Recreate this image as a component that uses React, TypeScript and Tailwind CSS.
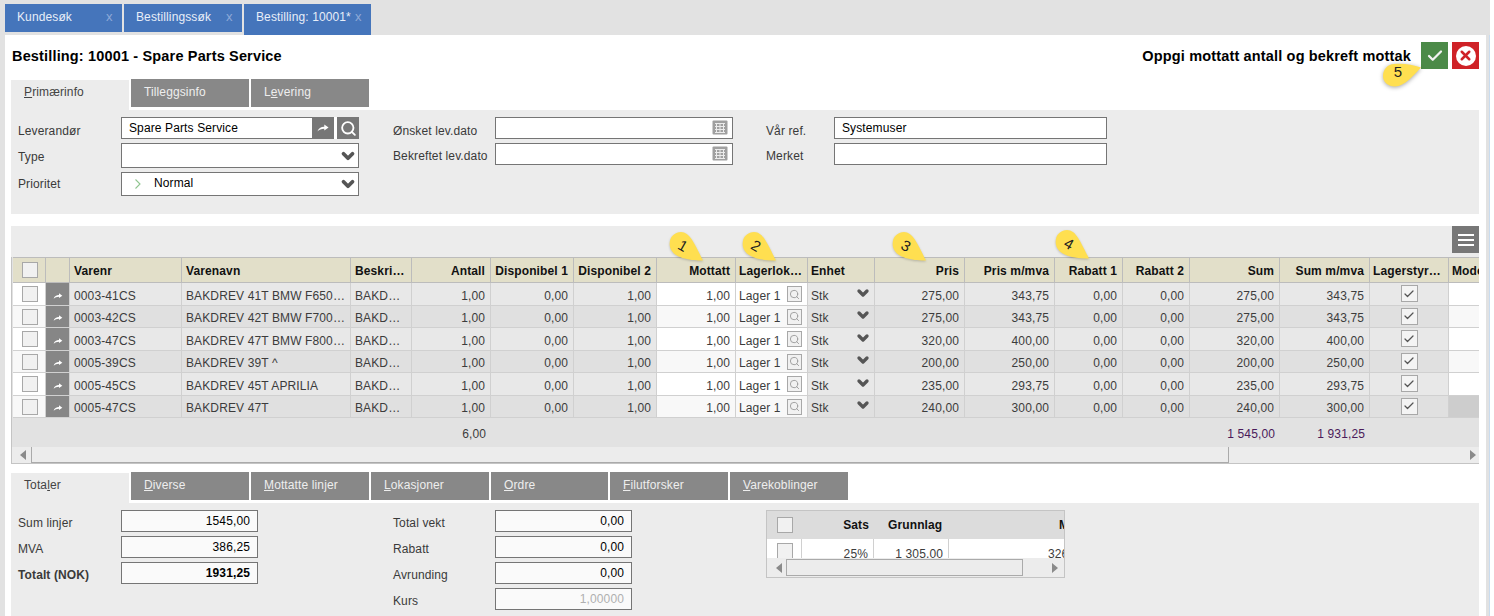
import React from "react";
import { Check, ChevronDown, Search, X } from "lucide-react";

const rows = [
  ["0003-41CS", "BAKDREV 41T BMW F650GS", "275,00", "343,75"],
  ["0003-42CS", "BAKDREV 42T BMW F700GS", "275,00", "343,75"],
  ["0003-47CS", "BAKDREV 47T BMW F800GS", "320,00", "400,00"],
  ["0005-39CS", "BAKDREV 39T ^", "200,00", "250,00"],
  ["0005-45CS", "BAKDREV 45T APRILIA", "235,00", "293,75"],
  ["0005-47CS", "BAKDREV 47T", "240,00", "300,00"],
];

const colWidths = [
  "w-[33px]", "w-[24px]", "w-[112px]", "w-[169px]", "w-[61px]", "w-[79px]", "w-[83px]", "w-[83px]", "w-[79px]", "w-[72px]",
  "w-[67px]", "w-[90px]", "w-[90px]", "w-[68px]", "w-[67px]", "w-[90px]", "w-[90px]", "w-[79px]", "w-[60px]",
];

const Arrow = ({ className }: { className: string }) => (
  <svg viewBox="0 0 14 9" className={className} fill="currentColor">
    <path d="M0.5 8.5 C1.5 5 4.5 3 8.5 3 L8.5 0.5 L13.5 4 L8.5 7.5 L8.5 5.5 C5 5.5 2.5 6.5 0.5 8.5 Z" />
  </svg>
);

const Box = ({ children, className = "" }: { children?: React.ReactNode; className?: string }) => (
  <div className={`border border-[#a8a8a8] bg-[#f1f1f1] flex items-center justify-center ${className}`}>{children}</div>
);

const Chevron = ({ className = "" }: { className?: string }) => (
  <ChevronDown strokeWidth={5} className={`text-[#555555] ${className}`} />
);

const Calendar = () => (
  <svg viewBox="0 0 16 16" className="w-[16px] h-[16px] text-[#a0a0a0]">
    <rect x="0.5" y="0.5" width="15" height="14" rx="1" fill="currentColor" />
    <path d="M3 3.5h10M3 6.5h10M3 9.5h10M3 12.5h10M4.5 3v10M8 3v10M11.5 3v10" stroke="#ececec" strokeWidth="1" fill="none" />
  </svg>
);

const Field = ({ children, className = "" }: { children?: React.ReactNode; className?: string }) => (
  <div className={`border border-[#757575] bg-white flex items-center min-w-0 ${className}`}>{children}</div>
);

const Label = ({ children, className = "pt-[3px]" }: { children: React.ReactNode; className?: string }) => (
  <div className={`text-[#3a3a3a] flex items-center ${className}`}>{children}</div>
);

const NumField = ({ children, className = "text-black" }: { children: React.ReactNode; className?: string }) => (
  <div className={`border border-[#757575] bg-[#fafafa] flex items-center justify-end pr-[7px] pb-[1px] h-[22px] ${className}`}>{children}</div>
);

const SubTab = ({ active, children, w = "w-[118px]" }: { active?: boolean; children: React.ReactNode; w?: string }) =>
  active ? (
    <div className="w-[118px] mr-[2px] h-[30px] self-end bg-[#ececec] text-[#444444] pl-[13px] pt-[5px]">{children}</div>
  ) : (
    <div className={`${w} mr-[2px] h-[28px] bg-[#888888] text-[#eeeeee] pl-[13px] pt-[6px]`}>{children}</div>
  );

const TopTab = ({ label, active, w, xGap }: { label: string; active?: boolean; w: string; xGap: string }) => (
  <div className={`${w} ${active ? "h-[31px]" : "h-[28px]"} bg-[#4575bb] text-[#e8eef8] mr-[2px] flex items-start pt-[6px] pl-[12px]`}>
    <span className="whitespace-nowrap">{label}</span>
    <span className={`${xGap} text-[#8ea9d8] text-[13px]`}>x</span>
  </div>
);

const Teardrop = ({ n, pos }: { n: string; pos: string }) => (
  <div className={`absolute w-[36px] h-[30px] ${pos}`}>
    <svg viewBox="0 0 36 30" className="w-full h-full drop-shadow-[0_1px_1px_rgba(0,0,0,0.2)]">
      <path d="M35 29.5 C24 29.5 5 28 2 16 C0 6 7 1 13 1 C22 1 26 12 35 29.5 Z" fill="#ffdf50" />
    </svg>
    <span className="absolute left-[9px] top-[6px] w-[12px] text-center text-[15px] leading-[18px] text-[#222222] rotate-[30deg]">{n}</span>
  </div>
);

const NumCell = ({ children, className = "" }: { children?: React.ReactNode; className?: string }) => (
  <td className={`border-r border-b border-[#d0d0d0] text-right pr-[5px] pt-[3px] text-[#3c3c3c] ${className}`}>{children}</td>
);

const TextCell = ({ children, className = "pr-[3px]" }: { children?: React.ReactNode; className?: string }) => (
  <td className={`border-r border-b border-[#d0d0d0] pl-[4px] pt-[3px] text-[#3c3c3c] truncate ${className}`}>{children}</td>
);

const Head = ({ children, right, className = "" }: { children?: React.ReactNode; right?: boolean; className?: string }) => (
  <th className={`border-r border-b border-t border-[#bcbcbc] font-bold text-[#111111] pt-[1px] ${right ? "text-right pr-[5px]" : "text-left pl-[3px]"} truncate ${className}`}>{children}</th>
);

export default function App() {
  return (
    <div className="relative w-[1494px] h-[616px] overflow-hidden bg-white text-[12px] leading-[14px] font-['Liberation_Sans',Arial,sans-serif] tracking-[0.12px]">
      <div className="h-[35px] w-[1490px] bg-[#e2e2e2] flex items-start pl-[5px] pt-[4px]">
        <TopTab label="Kundesøk" w="w-[117px]" xGap="ml-[34px]" />
        <TopTab label="Bestillingssøk" w="w-[118px]" xGap="ml-[15px]" />
        <TopTab label="Bestilling: 10001*" active w="w-[127px]" xGap="ml-[4px]" />
      </div>

      <div className="flex h-[581px]">
        <div className="w-[5px] bg-[#e2e2e2]" />
        <main className="w-[1481px] pl-[6px] pr-[7px]">
          <div className="h-[44px] flex items-start justify-between">
            <h1 className="text-[14.5px] leading-[16px] font-bold text-black mt-[13px] ml-[1px] tracking-[0.16px]">Bestilling: 10001 - Spare Parts Service</h1>
            <div className="flex items-start pt-[7px]">
              <span className="text-[14.5px] leading-[16px] font-bold text-black mt-[6px] mr-[10px] tracking-[0.16px]">Oppgi mottatt antall og bekreft mottak</span>
              <div className="w-[27px] h-[27px] bg-[#4b8a48] flex items-center justify-center">
                <Check className="w-[18px] h-[18px] text-[#f2f2f2]" strokeWidth={3} />
              </div>
              <div className="w-[27px] h-[27px] bg-[#cf2227] ml-[4px] flex items-center justify-center">
                <div className="w-[20px] h-[20px] rounded-full bg-white flex items-center justify-center">
                  <X className="w-[15px] h-[15px] text-[#cf2227]" strokeWidth={4} />
                </div>
              </div>
            </div>
          </div>

          <div className="flex h-[31px] items-start">
            <SubTab active><u>P</u>rimærinfo</SubTab>
            <SubTab>Tilleggsinfo</SubTab>
            <SubTab>L<u>e</u>vering</SubTab>
          </div>

          <section className="h-[104px] bg-[#ececec] pt-[7px] pl-[7px] flex items-start">
            <div className="grid grid-cols-[103px_238px] grid-rows-[22px_25px_24px] gap-y-[4px]">
              <Label className="pt-[5px]">Leverandør</Label>
              <Field className="relative pl-[7px] pb-[1px] text-black">
                Spare Parts Service
                <div className="absolute right-[-1px] top-[-1px] bottom-[-1px] w-[47px] flex">
                  <div className="w-[22px] bg-[#777777] flex items-center justify-center text-white"><Arrow className="w-[12px] h-[8px]" /></div>
                  <div className="w-[3px] bg-white" />
                  <div className="w-[22px] bg-[#777777] flex items-center justify-center text-white"><Search className="w-[17px] h-[17px]" strokeWidth={2.6} /></div>
                </div>
              </Field>
              <Label>Type</Label>
              <Field className="justify-end pr-[1px]"><Chevron className="w-[18px] h-[18px]" /></Field>
              <Label className="pt-0">Prioritet</Label>
              <Field className="pl-[13px] pr-[1px] text-black">
                <svg viewBox="0 0 6 10" className="w-[6px] h-[10px] text-[#8fc58f]" fill="none" stroke="currentColor" strokeWidth="1.1"><path d="M0.5 0.5 L5 5 L0.5 9.5" /></svg>
                <span className="ml-[13px] pb-[2px]">Normal</span>
                <Chevron className="w-[18px] h-[18px] ml-auto" />
              </Field>
            </div>

            <div className="grid grid-cols-[102px_238px] grid-rows-[22px_22px] gap-y-[4px] ml-[34px]">
              <Label className="pt-[5px]">Ønsket lev.dato</Label>
              <Field className="justify-end pr-[4px]"><Calendar /></Field>
              <Label>Bekreftet lev.dato</Label>
              <Field className="justify-end pr-[4px]"><Calendar /></Field>
            </div>

            <div className="grid grid-cols-[68px_273px] grid-rows-[22px_22px] gap-y-[4px] ml-[33px]">
              <Label className="pt-[5px]">Vår ref.</Label>
              <Field className="pl-[7px] pb-[1px] text-black">Systemuser</Field>
              <Label>Merket</Label>
              <Field />
            </div>
          </section>

          <div className="h-[12px]" />

          <section className="bg-[#ececec] border-b border-[#c4c4c4] h-[238px] flex flex-col">
            <div className="h-[31px] shrink-0 flex justify-end">
              <div className="w-[27px] h-[27px] bg-[#777777] flex flex-col items-center justify-center gap-[3px]">
                <div className="w-[16px] h-[2px] bg-white" />
                <div className="w-[16px] h-[2px] bg-white" />
                <div className="w-[16px] h-[2px] bg-white" />
              </div>
            </div>
            <div className="overflow-hidden border-l border-[#c4c4c4] pl-[1px] flex-1 bg-[#e2e2e2]">
              <table className="table-fixed w-[1496px] border-separate border-spacing-0">
                <colgroup>
                  {colWidths.map((w, i) => (
                    <col key={i} className={w} />
                  ))}
                </colgroup>
                <thead>
                  <tr className="h-[26px] bg-[#e2dfc9]">
                    <th className="border-r border-b border-t border-[#bcbcbc] pl-[9px]"><Box className="w-[16px] h-[16px]" /></th>
                    <Head />
                    <Head className="pl-[4px]">Varenr</Head>
                    <Head className="pl-[4px]">Varenavn</Head>
                    <Head className="pl-[4px] pr-[5px]">Beskrivelse</Head>
                    <Head right>Antall</Head>
                    <Head right>Disponibel 1</Head>
                    <Head right>Disponibel 2</Head>
                    <Head right>Mottatt</Head>
                    <Head>Lagerlokasjon</Head>
                    <Head>Enhet</Head>
                    <Head right>Pris</Head>
                    <Head right>Pris m/mva</Head>
                    <Head right>Rabatt 1</Head>
                    <Head right>Rabatt 2</Head>
                    <Head right>Sum</Head>
                    <Head right>Sum m/mva</Head>
                    <Head className="pr-[5px]">Lagerstyring</Head>
                    <Head>Modell</Head>
                  </tr>
                </thead>
                <tbody>
                  {rows.map((r, i) => {
                    const even = i % 2 === 1;
                    const light = even ? "bg-[#f8f8f8]" : "bg-white";
                    return (
                      <tr key={r[0]} className={`${even ? "h-[22px] bg-[#e0e0e0]" : "h-[23px] bg-[#e8e8e8]"}`}>
                        <td className={`border-r border-b border-[#d0d0d0] pl-[9px] ${light}`}><Box className="w-[16px] h-[16px]" /></td>
                        <td className="border-r border-b border-[#d0d0d0] bg-[#868686] text-white"><Arrow className="w-[10px] h-[6px] mx-auto mt-[3px]" /></td>
                        <TextCell>{r[0]}</TextCell>
                        <TextCell>{r[1]}</TextCell>
                        <TextCell className="pr-[8px]">BAKDREV</TextCell>
                        <NumCell>1,00</NumCell>
                        <NumCell>0,00</NumCell>
                        <NumCell>1,00</NumCell>
                        <NumCell className={light}>1,00</NumCell>
                        <td className={`border-r border-b border-[#d0d0d0] pl-[3px] ${light}`}>
                          <div className="flex items-center text-[#3c3c3c]">
                            <span className="pt-[3px]">Lager 1</span>
                            <Box className="w-[15px] h-[16px] ml-auto mr-[5px] bg-[#eeeeee]"><Search className="w-[11px] h-[11px] text-[#9a9a9a]" /></Box>
                          </div>
                        </td>
                        <td className="border-r border-b border-[#d0d0d0] pl-[3px] text-[#3c3c3c]">
                          <div className="flex items-center">
                            <span className="pt-[3px]">Stk</span>
                            <Chevron className="w-[16px] h-[16px] ml-auto mr-[3px] mb-[3px]" />
                          </div>
                        </td>
                        <NumCell>{r[2]}</NumCell>
                        <NumCell>{r[3]}</NumCell>
                        <NumCell>0,00</NumCell>
                        <NumCell>0,00</NumCell>
                        <NumCell>{r[2]}</NumCell>
                        <NumCell>{r[3]}</NumCell>
                        <td className="border-r border-b border-[#d0d0d0]">
                          <Box className="w-[17px] h-[17px] mx-auto bg-[#f4f4f4] mb-[1px]"><Check className="w-[12px] h-[12px] text-[#555555]" strokeWidth={2.5} /></Box>
                        </td>
                        <td className={`border-b border-[#d0d0d0] ${i === 5 ? "bg-[#cdcdcd]" : light}`} />
                      </tr>
                    );
                  })}
                  <tr className="h-[29px] bg-[#e2e2e2] text-[#3c3c3c]">
                    <td colSpan={5} />
                    <td className="text-right pr-[5px] pt-[2px]">6,00</td>
                    <td colSpan={9} />
                    <td className="text-right pr-[5px] pt-[2px] text-[#4a1a5a]">1 545,00</td>
                    <td className="text-right pr-[5px] pt-[2px] text-[#4a1a5a]">1 931,25</td>
                    <td colSpan={2} />
                  </tr>
                </tbody>
              </table>
              <div className="bg-[#ececec] h-[16px] flex items-stretch relative -ml-[1px]">
                <div className="w-[19px] flex items-center justify-center"><div className="w-0 h-0 border-y-[5px] border-y-transparent border-r-[6px] border-r-[#8a8a8a] ml-[2px]" /></div>
                <div className="w-[1198px] border-l border-r border-b border-[#aaaaaa]" />
                <div className="flex-1 flex items-center justify-end pr-[3px]"><div className="w-0 h-0 border-y-[5px] border-y-transparent border-l-[6px] border-l-[#8a8a8a]" /></div>
              </div>
            </div>
          </section>

          <div className="h-[8px]" />

          <div className="flex h-[31px] items-start">
            <SubTab active>Tota<u>l</u>er</SubTab>
            <SubTab><u>D</u>iverse</SubTab>
            <SubTab><u>M</u>ottatte linjer</SubTab>
            <SubTab><u>L</u>okasjoner</SubTab>
            <SubTab w="w-[117px]"><u>O</u>rdre</SubTab>
            <SubTab><u>F</u>ilutforsker</SubTab>
            <SubTab><u>V</u>arekoblinger</SubTab>
          </div>

          <section className="h-[113px] bg-[#ececec] pt-[7px] pl-[7px] flex items-start">
            <div className="grid grid-cols-[103px_137px] grid-rows-[22px_22px_22px] gap-y-[4px]">
              <Label>Sum linjer</Label>
              <NumField>1545,00</NumField>
              <Label>MVA</Label>
              <NumField>386,25</NumField>
              <Label className="pt-[3px] font-bold">Totalt (NOK)</Label>
              <NumField className="font-bold text-black">1931,25</NumField>
            </div>

            <div className="grid grid-cols-[102px_137px] grid-rows-[22px_22px_22px_22px] gap-y-[4px] ml-[135px]">
              <Label>Total vekt</Label>
              <NumField>0,00</NumField>
              <Label>Rabatt</Label>
              <NumField>0,00</NumField>
              <Label>Avrunding</Label>
              <NumField>0,00</NumField>
              <Label>Kurs</Label>
              <NumField className="text-[#b0b0b0]">1,00000</NumField>
            </div>

            <div className="ml-[134px] w-[299px] h-[68px] border border-[#c4c4c4] overflow-hidden flex flex-col">
              <div className="overflow-hidden h-[47px] bg-white">
                <table className="table-fixed w-[360px] border-separate border-spacing-0">
                  <colgroup>
                    <col className="w-[35px]" />
                    <col className="w-[72px]" />
                    <col className="w-[75px]" />
                    <col className="w-[178px]" />
                  </colgroup>
                  <thead>
                    <tr className="h-[28px] bg-[#dcdcdc]">
                      <th className="pl-[10px]"><Box className="w-[16px] h-[16px]" /></th>
                      <th className="text-right pr-[5px] font-bold text-[#111111]">Sats</th>
                      <th className="text-left pl-[14px] font-bold text-[#111111]">Grunnlag</th>
                      <th className="text-left pl-[110px] font-bold text-[#111111]">MVA</th>
                    </tr>
                  </thead>
                  <tbody>
                    <tr className="h-[20px] bg-white text-[#3c3c3c]">
                      <td className="pl-[10px] border-r border-[#d0d0d0] align-top pt-[4px]"><Box className="w-[16px] h-[16px]" /></td>
                      <td className="text-right pr-[5px] border-r border-[#d0d0d0] align-top pt-[8px]">25%</td>
                      <td className="text-right pr-[5px] border-r border-[#d0d0d0] align-top pt-[8px]">1 305,00</td>
                      <td className="pl-[99px] align-top pt-[8px]">326,25</td>
                    </tr>
                  </tbody>
                </table>
              </div>
              <div className="flex-1 bg-[#ececec] flex items-center">
                <div className="w-[19px] flex justify-center"><div className="w-0 h-0 border-y-[5px] border-y-transparent border-r-[6px] border-r-[#8a8a8a] ml-[5px]" /></div>
                <div className="w-[237px] h-[17px] border border-[#aaaaaa]" />
                <div className="flex-1 flex justify-center"><div className="w-0 h-0 border-y-[5px] border-y-transparent border-l-[6px] border-l-[#8a8a8a] ml-[22px]" /></div>
              </div>
            </div>
          </section>
        </main>
        <div className="w-[3px] bg-[#e2e2e2]" />
        <div className="w-[1px] bg-[#c9dcef]" />
      </div>

      <Teardrop n="1" pos="left-[668px] top-[231px]" />
      <Teardrop n="2" pos="left-[741px] top-[231px]" />
      <Teardrop n="3" pos="left-[891px] top-[231px]" />
      <Teardrop n="4" pos="left-[1054px] top-[229px]" />

      <div className="absolute left-[1382px] top-[62px] w-[40px] h-[25px]">
        <svg viewBox="0 0 40 25" className="w-full h-full drop-shadow-[0_1px_2px_rgba(0,0,0,0.35)]">
          <path d="M39 5.5 C31 14 23 24 13 24.5 C6 24.5 1 20 1 14 C1 7 6 2 12 2 C20 1 30 2 39 5.5 Z" fill="#ffdf50" />
        </svg>
        <span className="absolute left-[10px] top-[0px] w-[12px] text-center text-[15px] leading-[20px] text-[#222222]">5</span>
      </div>
    </div>
  );
}
